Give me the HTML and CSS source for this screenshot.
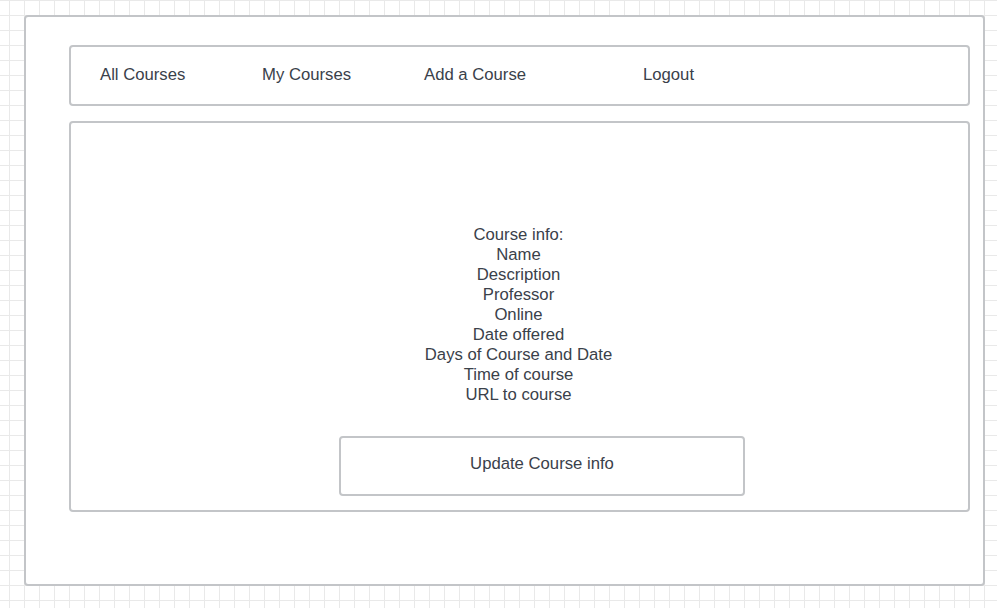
FILE: index.html
```html
<!DOCTYPE html>
<html>
<head>
<meta charset="utf-8">
<link rel="stylesheet" href="styles.css">
</head>
<body>
<div class="frame">
  <nav class="nav">
    <span class="nav-item">All Courses</span>
    <span class="nav-item">My Courses</span>
    <span class="nav-item">Add a Course</span>
    <span class="nav-item">Logout</span>
  </nav>
  <section class="content">
    <div class="info">
      <div>Course info:</div>
      <div>Name</div>
      <div>Description</div>
      <div>Professor</div>
      <div>Online</div>
      <div>Date offered</div>
      <div>Days of Course and Date</div>
      <div>Time of course</div>
      <div>URL to course</div>
    </div>
    <div class="button"><span class="button-label">Update Course info</span></div>
  </section>
</div>
</body>
</html>
```
FILE: styles.css
```css
* { box-sizing: border-box; }
html, body { margin: 0; padding: 0; }
body {
  width: 997px;
  height: 608px;
  overflow: hidden;
  font-family: "Liberation Sans", Arial, sans-serif;
  font-size: 16.7px;
  color: #3a414a;
  background-color: #ffffff;
  background-image:
    linear-gradient(to right, #e9e9e9 1px, transparent 1px),
    linear-gradient(to bottom, #e9e9e9 1px, transparent 1px);
  background-size: 15px 15px;
  background-position: 9px 0, 0 0;
  padding: 15px 0 0 24px;
}
.frame {
  width: 961px;
  height: 571px;
  background: #fff;
  border: 2px solid #c3c5c8;
  border-radius: 4px;
  padding: 28px 0 0 43px;
}
.nav {
  width: 901px;
  height: 61px;
  border: 2px solid #c3c5c8;
  border-radius: 4px;
  display: grid;
  grid-template-columns: 162px 162px 219px auto;
  align-items: center;
  padding-left: 29px;
  padding-bottom: 2px;
  line-height: 20px;
}
.content {
  margin-top: 15px;
  width: 901px;
  height: 391px;
  border: 2px solid #c3c5c8;
  border-radius: 4px;
  padding-top: 102px;
}
.info {
  text-align: center;
  line-height: 20px;
  margin-left: -2px;
}
.button {
  margin: 31px 0 0 268px;
  width: 406px;
  height: 60px;
  border: 2px solid #c3c5c8;
  border-radius: 4px;
  display: flex;
  align-items: center;
  justify-content: center;
  padding-bottom: 4px;
}
```
